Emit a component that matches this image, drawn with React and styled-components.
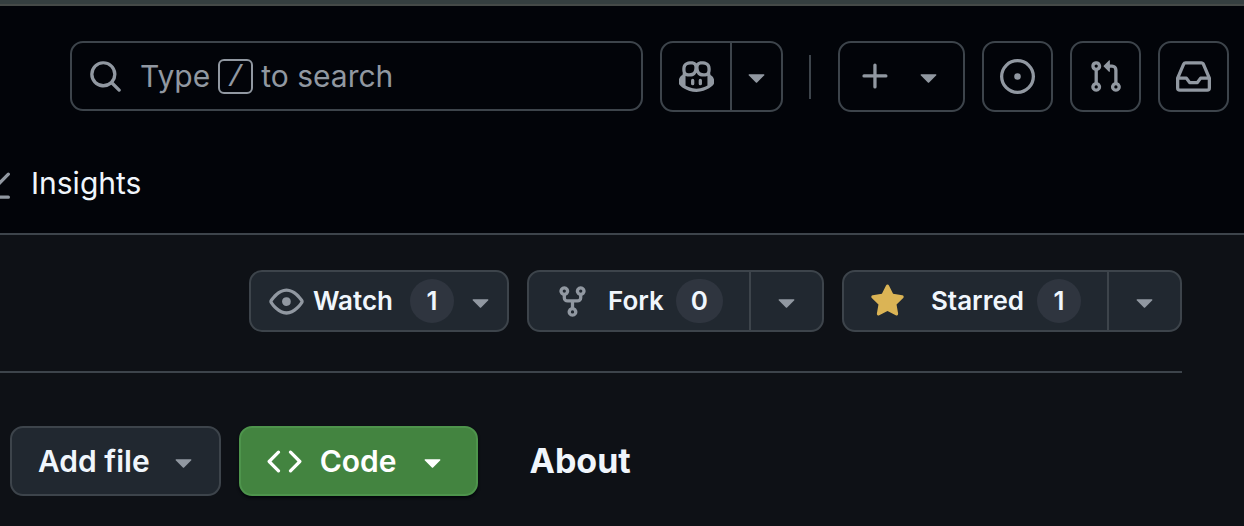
import React from "react";
import styled, { createGlobalStyle, css } from "styled-components";

const GlobalStyle = createGlobalStyle`
  *, *::before, *::after { box-sizing: border-box; }
  html { background: #0e1116; }
  body {
    margin: 0;
    background: #0e1116;
    color: #f0f6fc;
    font-family: Inter, "Liberation Sans", sans-serif;
    overflow-x: hidden;
  }
  button, input { font: inherit; color: inherit; }
`;

const line = "#3d444b";
const muted = "#9198a1";

const PATHS = {
  search:
    "M10.68 11.74a6 6 0 0 1-7.922-8.982 6 6 0 0 1 8.982 7.922l3.04 3.04a.749.749 0 0 1-.326 1.275.749.749 0 0 1-.734-.215ZM11.5 7a4.499 4.499 0 1 0-8.997 0A4.499 4.499 0 0 0 11.5 7Z",
  copilot:
    "M7.998 15.035c-4.562 0-7.873-2.914-7.998-3.749V9.338c.085-.628.677-1.686 1.588-2.065.013-.07.024-.143.036-.218.029-.183.06-.384.126-.612-.201-.508-.254-1.084-.254-1.656 0-.87.128-1.769.693-2.484.579-.733 1.494-1.124 2.724-1.261 1.206-.134 2.262.034 2.944.765.05.053.096.108.139.165.044-.057.094-.112.143-.165.682-.731 1.738-.899 2.944-.765 1.23.137 2.145.528 2.724 1.261.566.715.693 1.614.693 2.484 0 .572-.053 1.148-.254 1.656.066.228.098.429.126.612.012.076.024.148.037.218.924.385 1.522 1.471 1.591 2.095v1.872c0 .766-3.351 3.795-8.002 3.795Zm0-1.485c2.28 0 4.584-1.11 5.002-1.433V7.862l-.023-.116c-.49.21-1.075.291-1.727.291-1.146 0-2.059-.327-2.71-.991A3.222 3.222 0 0 1 8 6.303a3.24 3.24 0 0 1-.544.743c-.65.664-1.563.991-2.71.991-.652 0-1.236-.081-1.727-.291l-.023.116v4.255c.419.323 2.722 1.433 5.002 1.433ZM6.762 2.83c-.193-.206-.637-.413-1.682-.297-1.019.113-1.479.404-1.713.7-.247.312-.369.789-.369 1.554 0 .793.129 1.171.308 1.371.162.181.519.379 1.442.379.853 0 1.339-.235 1.638-.54.315-.322.527-.827.617-1.553.117-.935-.037-1.395-.241-1.614Zm4.155-.297c-1.044-.116-1.488.091-1.681.297-.204.219-.359.679-.242 1.614.091.726.303 1.231.618 1.553.299.305.784.54 1.638.54.922 0 1.28-.198 1.442-.379.179-.2.308-.578.308-1.371 0-.765-.123-1.242-.37-1.554-.233-.296-.693-.587-1.713-.7ZM6.25 9.037a.75.75 0 0 1 .75.75v1.501a.75.75 0 0 1-1.5 0V9.787a.75.75 0 0 1 .75-.75Zm4.25.75v1.501a.75.75 0 0 1-1.5 0V9.787a.75.75 0 0 1 1.5 0Z",
  caret:
    "m4.427 7.427 3.396 3.396a.25.25 0 0 0 .354 0l3.396-3.396A.25.25 0 0 0 11.396 7H4.604a.25.25 0 0 0-.177.427Z",
  plus:
    "M7.75 2a.75.75 0 0 1 .75.75V7h4.25a.75.75 0 0 1 0 1.5H8.5v4.25a.75.75 0 0 1-1.5 0V8.5H2.75a.75.75 0 0 1 0-1.5H7V2.75A.75.75 0 0 1 7.75 2Z",
  issue:
    "M8 9.5a1.5 1.5 0 1 0 0-3 1.5 1.5 0 0 0 0 3ZM8 0a8 8 0 1 1 0 16A8 8 0 0 1 8 0ZM1.5 8a6.5 6.5 0 1 0 13 0 6.5 6.5 0 0 0-13 0Z",
  pull:
    "M1.5 3.25a2.25 2.25 0 1 1 3 2.122v5.256a2.251 2.251 0 1 1-1.5 0V5.372A2.25 2.25 0 0 1 1.5 3.25Zm5.677-.177L9.573.677A.25.25 0 0 1 10 .854V2.5h1A2.5 2.5 0 0 1 13.5 5v5.628a2.251 2.251 0 1 1-1.5 0V5a1 1 0 0 0-1-1h-1v1.646a.25.25 0 0 1-.427.177L7.177 3.427a.25.25 0 0 1 0-.354ZM3.75 2.5a.75.75 0 1 0 0 1.5.75.75 0 0 0 0-1.5Zm0 9.5a.75.75 0 1 0 0 1.5.75.75 0 0 0 0-1.5Zm8.25.75a.75.75 0 1 0 1.5 0 .75.75 0 0 0-1.5 0Z",
  inbox:
    "M2.8 2.06A1.75 1.75 0 0 1 4.41 1h7.18c.7 0 1.333.417 1.61 1.06l2.74 6.395c.04.093.06.194.06.295v4.5A1.75 1.75 0 0 1 14.25 15H1.75A1.75 1.75 0 0 1 0 13.25v-4.5c0-.101.02-.202.06-.295Zm1.61.44a.25.25 0 0 0-.23.152L1.887 8H4.75a.75.75 0 0 1 .6.3L6.625 10h2.75l1.275-1.7a.75.75 0 0 1 .6-.3h2.863L11.82 2.652a.25.25 0 0 0-.23-.152Zm10.09 7h-2.875l-1.275 1.7a.75.75 0 0 1-.6.3h-3.5a.75.75 0 0 1-.6-.3L4.375 9.5H1.5v3.75c0 .138.112.25.25.25h12.5a.25.25 0 0 0 .25-.25Z",
  eye:
    "M8 2c1.981 0 3.671.992 4.933 2.078 1.27 1.091 2.187 2.345 2.637 3.023a1.62 1.62 0 0 1 0 1.798c-.45.678-1.367 1.932-2.637 3.023C11.67 13.008 9.981 14 8 14c-1.981 0-3.671-.992-4.933-2.078C1.797 10.83.88 9.576.43 8.898a1.62 1.62 0 0 1 0-1.798c.45-.677 1.367-1.931 2.637-3.022C4.33 2.992 6.019 2 8 2ZM1.679 7.932a.12.12 0 0 0 0 .136c.411.622 1.241 1.75 2.366 2.717C5.176 11.758 6.527 12.5 8 12.5c1.473 0 2.825-.742 3.955-1.715 1.124-.967 1.954-2.096 2.366-2.717a.12.12 0 0 0 0-.136c-.412-.621-1.242-1.75-2.366-2.717C10.824 4.242 9.473 3.5 8 3.5c-1.473 0-2.825.742-3.955 1.715-1.124.967-1.954 2.096-2.366 2.717ZM8 10a2 2 0 1 1-.001-3.999A2 2 0 0 1 8 10Z",
  fork:
    "M5 5.372v.878c0 .414.336.75.75.75h4.5a.75.75 0 0 0 .75-.75v-.878a2.25 2.25 0 1 1 1.5 0v.878a2.25 2.25 0 0 1-2.25 2.25h-1.5v2.128a2.251 2.251 0 1 1-1.5 0V8.5h-1.5A2.25 2.25 0 0 1 3.5 6.25v-.878a2.25 2.25 0 1 1 1.5 0ZM5 3.25a.75.75 0 1 0-1.5 0 .75.75 0 0 0 1.5 0Zm6.75.75a.75.75 0 1 0 0-1.5.75.75 0 0 0 0 1.5Zm-3 8.75a.75.75 0 1 0-1.5 0 .75.75 0 0 0 1.5 0Z",
  star:
    "M8 .25a.75.75 0 0 1 .673.418l1.882 3.815 4.21.612a.75.75 0 0 1 .416 1.279l-3.046 2.97.719 4.192a.751.751 0 0 1-1.088.791L8 12.347l-3.766 1.98a.75.75 0 0 1-1.088-.79l.72-4.194L.818 6.374a.75.75 0 0 1 .416-1.28l4.21-.611L7.327.668A.75.75 0 0 1 8 .25Z",
  code:
    "m11.28 3.22 4.25 4.25a.75.75 0 0 1 0 1.06l-4.25 4.25a.749.749 0 0 1-1.275-.326.749.749 0 0 1 .215-.734L13.94 8l-3.72-3.72a.749.749 0 0 1 .326-1.275.749.749 0 0 1 .734.215Zm-6.56 0a.751.751 0 0 1 1.042.018.751.751 0 0 1 .018 1.042L2.06 8l3.72 3.72a.749.749 0 0 1-.326 1.275.749.749 0 0 1-.734-.215L.47 8.53a.75.75 0 0 1 0-1.06Z",
  graph:
    "M1.5 1.75V13.5h13.75a.75.75 0 0 1 0 1.5H.75a.75.75 0 0 1-.75-.75V1.75a.75.75 0 0 1 1.5 0Zm14.28 2.53-5.25 5.25a.75.75 0 0 1-1.06 0L7 7.06 4.28 9.78a.751.751 0 0 1-1.042-.018.751.751 0 0 1-.018-1.042l3.25-3.25a.75.75 0 0 1 1.06 0L10 7.94l4.72-4.72a.751.751 0 0 1 1.042.018.751.751 0 0 1 .018 1.042Z",
};

const Svg = styled.svg`
  display: block;
  flex: none;
  width: 35px;
  height: 35px;
  fill: ${(p) => p.$tone || muted};
`;

function Icon({ name, tone }) {
  return (
    <Svg viewBox="0 0 16 16" aria-hidden="true" $tone={tone}>
      <path fillRule="evenodd" d={PATHS[name]} />
    </Svg>
  );
}

const Header = styled.header`
  background: #020409;
  border-top: 4px solid #353f40;
  border-bottom: 2px solid ${line};
`;

const TopBar = styled.div`
  display: flex;
  align-items: flex-start;
  gap: 17px;
  padding: 35px 15px 0 70px;
  border-top: 2px solid #454a48;
`;

const SearchBox = styled.label`
  position: relative;
  flex: 1;
  min-width: 0;
  display: flex;
  align-items: center;
  height: 70px;
  padding: 0 16px;
  gap: 17px;
  border: 2px solid ${line};
  border-radius: 13px;
  cursor: text;
`;

const SearchHint = styled.span`
  display: flex;
  align-items: center;
  gap: 8px;
  color: ${muted};
  font-size: 30px;
  line-height: 38px;
  white-space: nowrap;
`;

const SlashKey = styled.kbd`
  display: flex;
  align-items: center;
  justify-content: center;
  width: 35px;
  height: 35px;
  padding-top: 4px;
  border: 2px solid ${muted};
  border-radius: 6px;
  font-family: "Liberation Mono", monospace;
  font-size: 30px;
`;

const SearchInput = styled.input`
  position: absolute;
  inset: 0;
  width: 100%;
  padding: 0 70px;
  border: 0;
  background: transparent;
  font-size: 30px;
  outline: none;
`;

const Group = styled.div`
  display: flex;
  flex: none;
  border: 2px solid ${line};
  border-radius: 13px;
  background: ${(p) => (p.$filled ? "#212830" : "transparent")};
`;

const Segment = styled.button`
  display: flex;
  align-items: center;
  justify-content: center;
  padding: 0;
  border: 0;
  background: transparent;
  & + & { border-left: 2px solid ${line}; }
`;

const BarSegment = styled(Segment)`
  height: 67px;
  width: ${(p) => (p.$narrow ? "51px" : "68px")};
`;

const BarButton = styled.button`
  display: flex;
  flex: none;
  align-items: center;
  justify-content: center;
  gap: 18px;
  width: ${(p) => (p.$wide ? "127px" : "71px")};
  height: 71px;
  padding: 0;
  border: 2px solid ${line};
  border-radius: 13px;
  background: transparent;
`;

const Separator = styled.span`
  flex: none;
  align-self: center;
  width: 2px;
  height: 44px;
  margin: 0 10px 0 9px;
  background: ${line};
`;

const Tabs = styled.nav`
  display: flex;
  height: 121px;
  padding-top: 49px;
  overflow: hidden;
`;

const Tab = styled.a`
  display: flex;
  align-items: center;
  gap: 21px;
  height: 44px;
  margin-left: -25px;
  color: #f0f6fc;
  font-size: 30px;
  line-height: 36px;
  text-decoration: none;
`;

const RepoActions = styled.div`
  display: flex;
  justify-content: flex-end;
  align-items: flex-start;
  gap: 18px;
  margin-right: 62px;
  padding: 35px 0 39px;
  border-bottom: 2px solid ${line};
`;

const ActionSegment = styled(Segment)`
  height: 58px;
  padding: ${(p) => p.$pad || "0 18px"};
  font-size: 26px;
  font-weight: 600;
  line-height: 32px;
`;

const ActionLabel = styled.span`
  margin: 0 ${(p) => p.$after}px 0 ${(p) => p.$before}px;
`;

const Count = styled.span`
  display: flex;
  align-items: center;
  justify-content: center;
  min-width: 44px;
  height: 44px;
  padding: 0 15px;
  border-radius: 22px;
  background: #2f353f;
`;

const FileRow = styled.main`
  display: flex;
  align-items: center;
  gap: 18px;
  padding: 53px 10px 30px;
`;

const FileButton = styled.button`
  display: flex;
  align-items: center;
  flex: none;
  gap: 16px;
  height: 70px;
  padding: 0 18px 0 26px;
  border: 2px solid ${line};
  border-radius: 13px;
  background: #212830;
  font-size: 30px;
  font-weight: 600;
  line-height: 36px;
  ${(p) =>
    p.$primary &&
    css`
      gap: 18px;
      padding: 0 26px;
      border-color: #4e944c;
      background: #438440;
      color: #ffffff;
      box-shadow: 0 2px 3px rgba(1, 4, 9, 0.8);
    `}
`;

const AboutTitle = styled.h2`
  margin: 0 0 0 34px;
  font-size: 34px;
  font-weight: 700;
  line-height: 44px;
`;

export default function App() {
  return (
    <>
      <GlobalStyle />
      <Header>
        <TopBar>
          <SearchBox>
            <Icon name="search" />
            <SearchHint>
              Type <SlashKey>/</SlashKey> to search
            </SearchHint>
            <SearchInput type="text" />
          </SearchBox>
          <Group>
            <BarSegment aria-label="Copilot">
              <Icon name="copilot" />
            </BarSegment>
            <BarSegment $narrow aria-label="Copilot options">
              <Icon name="caret" />
            </BarSegment>
          </Group>
          <Separator />
          <BarButton $wide aria-label="Create new">
            <Icon name="plus" />
            <Icon name="caret" />
          </BarButton>
          <BarButton aria-label="Issues">
            <Icon name="issue" />
          </BarButton>
          <BarButton aria-label="Pull requests">
            <Icon name="pull" />
          </BarButton>
          <BarButton aria-label="Notifications">
            <Icon name="inbox" />
          </BarButton>
        </TopBar>
        <Tabs>
          <Tab href="#insights">
            <Icon name="graph" />
            Insights
          </Tab>
        </Tabs>
      </Header>

      <RepoActions>
        <Group $filled>
          <ActionSegment $pad="0 9px 0 18px">
            <Icon name="eye" />
            <ActionLabel $before={9} $after={17}>Watch</ActionLabel>
            <Count>1</Count>
            <ActionLabel $before={9} $after={0}>
              <Icon name="caret" />
            </ActionLabel>
          </ActionSegment>
        </Group>
        <Group $filled>
          <ActionSegment $pad="0 26px">
            <Icon name="fork" />
            <ActionLabel $before={18} $after={12}>Fork</ActionLabel>
            <Count>0</Count>
          </ActionSegment>
          <ActionSegment aria-label="Fork options">
            <Icon name="caret" />
          </ActionSegment>
        </Group>
        <Group $filled>
          <ActionSegment $pad="0 26px">
            <Icon name="star" tone="#dbb455" />
            <ActionLabel $before={26} $after={13}>Starred</ActionLabel>
            <Count>1</Count>
          </ActionSegment>
          <ActionSegment aria-label="Star options">
            <Icon name="caret" />
          </ActionSegment>
        </Group>
      </RepoActions>

      <FileRow>
        <FileButton>
          Add file
          <Icon name="caret" />
        </FileButton>
        <FileButton $primary>
          <Icon name="code" tone="#ffffff" />
          Code
          <Icon name="caret" tone="#ffffff" />
        </FileButton>
        <AboutTitle>About</AboutTitle>
      </FileRow>
    </>
  );
}
